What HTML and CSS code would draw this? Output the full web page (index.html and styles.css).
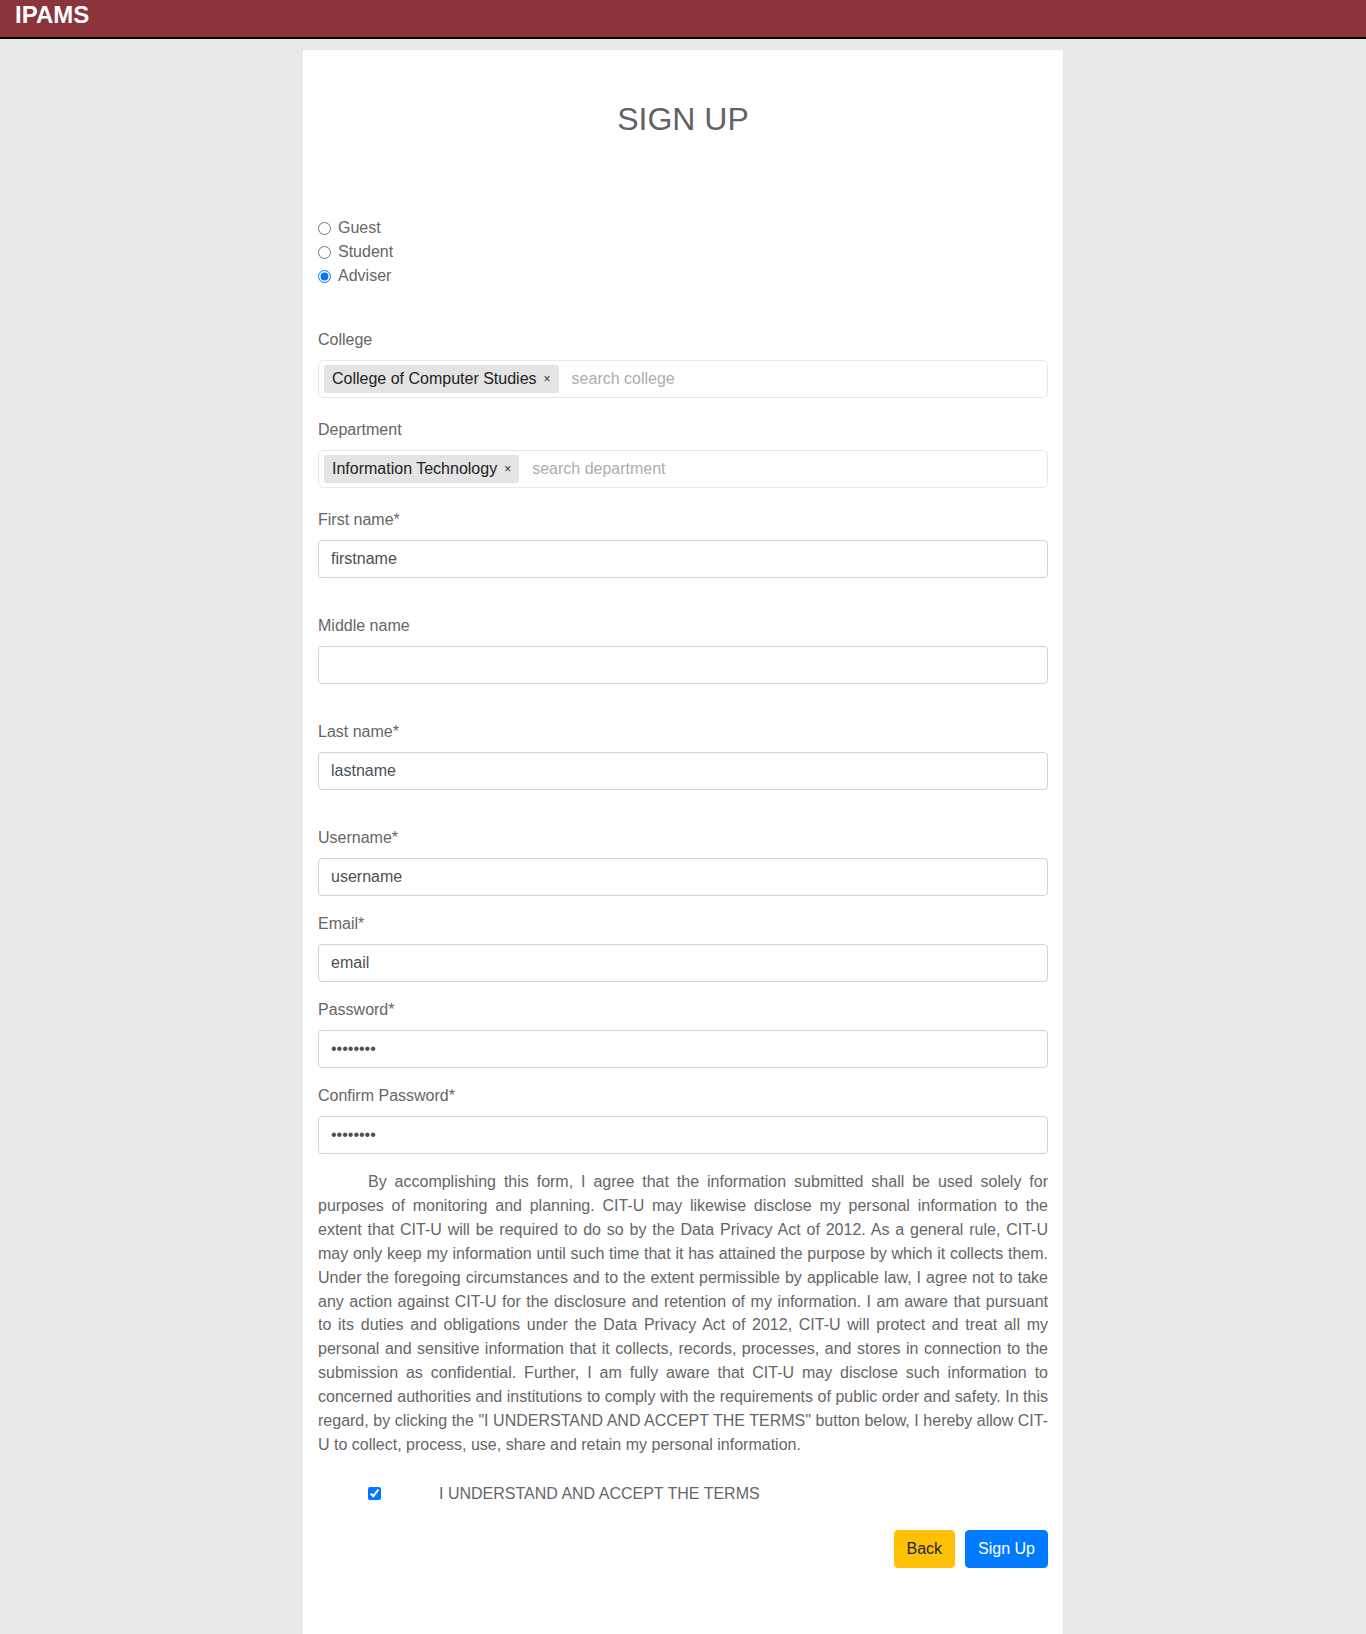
FILE: index.html
```html
<!DOCTYPE html>
<html lang="en">
<head>
<meta charset="utf-8">
<title>IPAMS - Sign Up</title>
<link rel="stylesheet" href="styles.css">
</head>
<body>
<header class="topbar"><span class="brand">IPAMS</span></header>
<main class="card">
  <h1 class="title">SIGN UP</h1>
  <div class="roles">
    <label class="role"><input type="radio" name="role" class="radio"><span>Guest</span></label>
    <label class="role"><input type="radio" name="role" class="radio"><span>Student</span></label>
    <label class="role"><input type="radio" name="role" class="radio" checked><span>Adviser</span></label>
  </div>

  <div class="group g-college">
    <label class="lbl">College</label>
    <div class="multi">
      <span class="tag">College of Computer Studies<span class="tag-x">×</span></span>
      <span class="ph">search college</span>
    </div>
  </div>

  <div class="group g-dept">
    <label class="lbl">Department</label>
    <div class="multi">
      <span class="tag">Information Technology<span class="tag-x">×</span></span>
      <span class="ph">search department</span>
    </div>
  </div>

  <div class="group g-first">
    <label class="lbl">First name*</label>
    <input class="ctrl" type="text" value="firstname">
  </div>
  <div class="group g-middle">
    <label class="lbl">Middle name</label>
    <input class="ctrl" type="text" value="">
  </div>
  <div class="group g-lastname">
    <label class="lbl">Last name*</label>
    <input class="ctrl" type="text" value="lastname">
  </div>
  <div class="group g-user">
    <label class="lbl">Username*</label>
    <input class="ctrl" type="text" value="username">
  </div>
  <div class="group g-email">
    <label class="lbl">Email*</label>
    <input class="ctrl" type="text" value="email">
  </div>
  <div class="group g-pw">
    <label class="lbl">Password*</label>
    <input class="ctrl" type="password" value="password">
  </div>
  <div class="group g-last">
    <label class="lbl">Confirm Password*</label>
    <input class="ctrl" type="password" value="password">
  </div>

  <p class="terms">By accomplishing this form, I agree that the information submitted shall be used solely for purposes of monitoring and planning. CIT-U may likewise disclose my personal information to the extent that CIT-U will be required to do so by the Data Privacy Act of 2012. As a general rule, CIT-U may only keep my information until such time that it has attained the purpose by which it collects them. Under the foregoing circumstances and to the extent permissible by applicable law, I agree not to take any action against CIT-U for the disclosure and retention of my information. I am aware that pursuant to its duties and obligations under the Data Privacy Act of 2012, CIT-U will protect and treat all my personal and sensitive information that it collects, records, processes, and stores in connection to the submission as confidential. Further, I am fully aware that CIT-U may disclose such information to concerned authorities and institutions to comply with the requirements of public order and safety. In this regard, by clicking the "I UNDERSTAND AND ACCEPT THE TERMS" button below, I hereby allow CIT-U to collect, process, use, share and retain my personal information.</p>

  <label class="accept"><input type="checkbox" class="check" checked><span>I UNDERSTAND AND ACCEPT THE TERMS</span></label>

  <div class="actions">
    <button class="btn btn-back" type="button">Back</button>
    <button class="btn btn-sign" type="button">Sign Up</button>
  </div>
</main>
</body>
</html>
```

FILE: styles.css
```css
* { box-sizing: border-box; }
html, body { margin: 0; padding: 0; }
body {
  background: #e9e9e9;
  font-family: "Liberation Sans", Arial, sans-serif;
  font-size: 16px;
  line-height: 24px;
  color: #666;
}
.topbar {
  height: 39px;
  background: #8b343b;
  border-bottom: 2px solid #000;
  padding: 3px 15px 0;
}
.brand {
  display: block;
  color: #fff;
  font-weight: 700;
  font-size: 24px;
  line-height: 24px;
}
.card {
  width: 760px;
  margin: 11px auto 0;
  background: #fff;
  min-height: 1584px;
  padding: 50px 15px 20px;
}
.title {
  margin: 0;
  font-size: 32px;
  font-weight: 400;
  line-height: 38px;
  text-align: center;
  color: #5f6368;
}
.roles {
  margin-top: 78px;
  display: flex;
  flex-direction: column;
}
.role {
  display: flex;
  align-items: center;
  gap: 7px;
  height: 24px;
  color: #666;
}
.radio {
  margin: 0;
  width: 13px;
  height: 13px;
}
.group { display: flex; flex-direction: column; }
.g-college { margin-top: 40px; margin-bottom: 20px; }
.g-dept { margin-bottom: 20px; }
.g-first { margin-bottom: 36px; }
.g-middle { margin-bottom: 36px; }
.g-lastname { margin-bottom: 36px; }
.g-user { margin-bottom: 16px; }
.g-email { margin-bottom: 16px; }
.g-pw { margin-bottom: 16px; }
.g-last { margin-bottom: 0; }
.lbl {
  display: block;
  margin-bottom: 8px;
  line-height: 24px;
  color: #666;
}
.multi {
  height: 38px;
  border: 1px solid #e8e8e8;
  border-radius: 5px;
  padding: 4px 5px;
  display: flex;
  align-items: center;
  gap: 13px;
}
.tag {
  display: inline-flex;
  align-items: center;
  height: 28px;
  background: #e4e4e4;
  border-radius: 3px;
  padding: 0 8px 0 8px;
  color: #222;
  white-space: nowrap;
}
.tag-x {
  font-size: 12px;
  margin-left: 7px;
  color: #333;
}
.ph { color: #adadad; }
.ctrl {
  display: block;
  width: 100%;
  height: 38px;
  padding: 6px 12px;
  border: 1px solid #ced4da;
  border-radius: 4px;
  font-family: inherit;
  font-size: 16px;
  line-height: 24px;
  color: #495057;
  background: #fff;
}
.terms {
  margin: 16px 0 0;
  text-align: justify;
  text-indent: 50px;
  line-height: 23.9px;
  color: #666;
}
.accept {
  margin-top: 25px;
  display: flex;
  align-items: center;
  gap: 58px;
  padding-left: 50px;
  height: 24px;
  color: #666;
}
.check {
  margin: 0;
  width: 13px;
  height: 13px;
}
.actions {
  margin-top: 24px;
  display: flex;
  justify-content: flex-end;
  gap: 10px;
}
.btn {
  font-family: inherit;
  font-size: 16px;
  line-height: 24px;
  padding: 6px 12px;
  border: 1px solid transparent;
  border-radius: 4px;
  cursor: pointer;
}
.btn-back { background: #ffc107; border-color: #ffc107; color: #212529; }
.btn-sign { background: #007bff; border-color: #007bff; color: #fff; }
```
